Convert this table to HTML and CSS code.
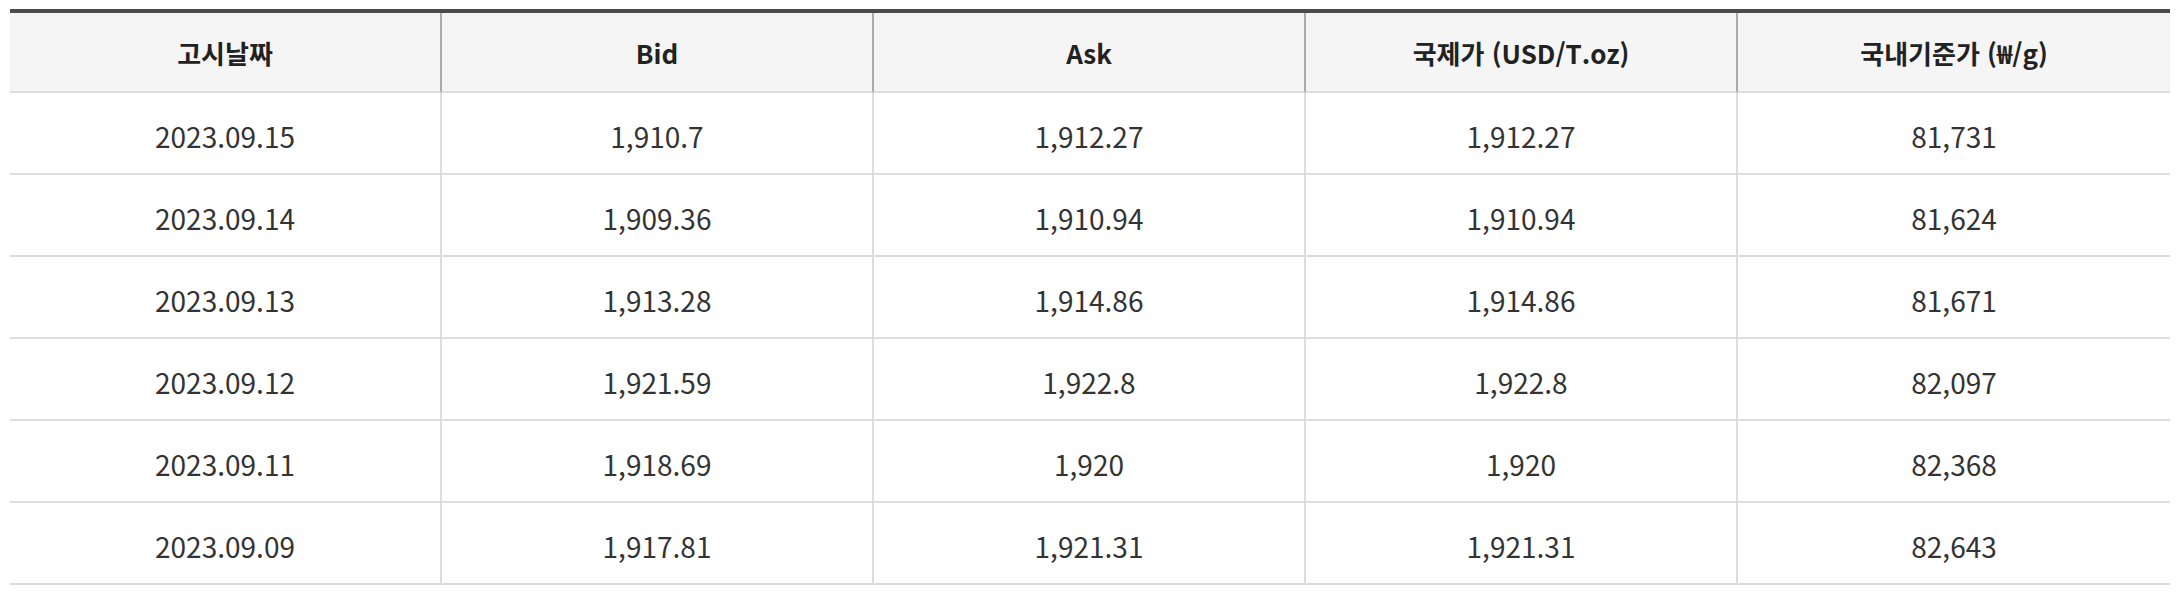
FILE: index.html
```html
<!DOCTYPE html>
<html lang="ko">
<head>
<meta charset="utf-8">
<link rel="stylesheet" href="styles.css">
</head>
<body>
<div class="wrap">
<table class="price-table">
<thead>
<tr><th>고시날짜</th><th>Bid</th><th>Ask</th><th>국제가 (USD/T.oz)</th><th>국내기준가 (₩/g)</th></tr>
</thead>
<tbody>
<tr><td>2023.09.15</td><td>1,910.7</td><td>1,912.27</td><td>1,912.27</td><td>81,731</td></tr>
<tr><td>2023.09.14</td><td>1,909.36</td><td>1,910.94</td><td>1,910.94</td><td>81,624</td></tr>
<tr><td>2023.09.13</td><td>1,913.28</td><td>1,914.86</td><td>1,914.86</td><td>81,671</td></tr>
<tr><td>2023.09.12</td><td>1,921.59</td><td>1,922.8</td><td>1,922.8</td><td>82,097</td></tr>
<tr><td>2023.09.11</td><td>1,918.69</td><td>1,920</td><td>1,920</td><td>82,368</td></tr>
<tr><td>2023.09.09</td><td>1,917.81</td><td>1,921.31</td><td>1,921.31</td><td>82,643</td></tr>
</tbody>
</table>
</div>
</body>
</html>
```
FILE: styles.css
```css
html, body {
  margin: 0;
  padding: 0;
  background: #ffffff;
}
.wrap {
  padding: 9px 12px 0 10px;
}
.price-table {
  width: 2160px;
  border-collapse: separate;
  border-spacing: 0;
  table-layout: fixed;
  border-top: 4px solid #4b4b4b;
  font-family: "Noto Sans CJK KR", "Noto Sans", sans-serif;
}
.price-table th {
  height: 78px;
  padding: 0;
  background: #f5f5f5;
  color: #222222;
  font-size: 26px;
  font-weight: 700;
  text-align: center;
  vertical-align: middle;
  border-bottom: 2px solid #dddddd;
  border-right: 2px solid #aaaaaa;
}
.price-table td {
  height: 75px;
  padding: 5px 0 0;
  color: #333333;
  font-size: 28px;
  font-weight: 400;
  text-align: center;
  vertical-align: middle;
  border-bottom: 2px solid #dddddd;
  border-right: 2px solid #dddddd;
}
.price-table th:last-child,
.price-table td:last-child {
  border-right: none;
}
```
